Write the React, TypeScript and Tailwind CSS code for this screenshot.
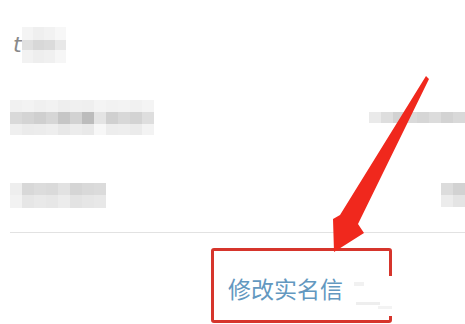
import React from 'react';

// blurred (mosaic) placeholders from the source screenshot
type MosaicProps = {
  rows: string[][];
  cellW: string;
  rowH: string[];
};

function Mosaic({ rows, cellW, rowH }: MosaicProps) {
  return (
    <div className="flex flex-col shrink-0">
      {rows.map((row, i) => (
        <div key={i} className={cn('flex', rowH[i])}>
          {row.map((c, j) => (
            <div key={j} className={cn(cellW, 'h-full', c)} />
          ))}
        </div>
      ))}
    </div>
  );
}

function cn(...parts: string[]) {
  return parts.filter(Boolean).join(' ');
}

const headerCells = [
  ['bg-[#f4f4f4]', 'bg-[#efefef]', 'bg-[#f2f2f2]', 'bg-[#f7f7f7]'],
  ['bg-[#e0e0e0]', 'bg-[#d8d8d8]', 'bg-[#dbdbdb]', 'bg-[#e8e8e8]'],
  ['bg-[#f2f2f2]', 'bg-[#eeeeee]', 'bg-[#f0f0f0]', 'bg-[#f6f6f6]'],
];

const row1Cells = [
  ['bg-[#f1f1f1]', 'bg-[#f3f3f3]', 'bg-[#f0f0f0]', 'bg-[#f2f2f2]', 'bg-[#eeeeee]', 'bg-[#f0f0f0]', 'bg-[#efefef]', 'bg-[#f4f4f4]', 'bg-[#f2f2f2]', 'bg-[#f3f3f3]', 'bg-[#f1f1f1]', 'bg-[#f4f4f4]'],
  ['bg-[#d9d9d9]', 'bg-[#d4d4d4]', 'bg-[#cfcfcf]', 'bg-[#d6d6d6]', 'bg-[#c6c6c6]', 'bg-[#d2d2d2]', 'bg-[#bcbcbc]', 'bg-[#e4e4e4]', 'bg-[#d0d0d0]', 'bg-[#d8d8d8]', 'bg-[#d3d3d3]', 'bg-[#dedede]'],
  ['bg-[#efefef]', 'bg-[#ebebeb]', 'bg-[#ececec]', 'bg-[#eeeeee]', 'bg-[#e8e8e8]', 'bg-[#ececec]', 'bg-[#e9e9e9]', 'bg-[#f7f7f7]', 'bg-[#ededed]', 'bg-[#eeeeee]', 'bg-[#ebebeb]', 'bg-[#f3f3f3]'],
];

const row1Right = [
  ['bg-[#eaeaea]', 'bg-[#dedede]', 'bg-[#d2d2d2]', 'bg-[#dadada]', 'bg-[#d6d6d6]', 'bg-[#dcdcdc]', 'bg-[#d3d3d3]', 'bg-[#d9d9d9]'],
];

const row2Cells = [
  ['bg-[#eeeeee]', 'bg-[#d8d8d8]', 'bg-[#dcdcdc]', 'bg-[#dadada]', 'bg-[#e2e2e2]', 'bg-[#d5d5d5]', 'bg-[#d9d9d9]', 'bg-[#dbdbdb]'],
  ['bg-[#f2f2f2]', 'bg-[#e6e6e6]', 'bg-[#e9e9e9]', 'bg-[#e7e7e7]', 'bg-[#ececec]', 'bg-[#e3e3e3]', 'bg-[#e6e6e6]', 'bg-[#e8e8e8]'],
];

const row2Right = [
  ['bg-[#dcdcdc]', 'bg-[#d2d2d2]'],
  ['bg-[#ececec]', 'bg-[#e4e4e4]'],
];

export default function App() {
  return (
    <div className="relative w-[465px] h-[324px] overflow-hidden bg-white font-['Noto_Sans_CJK_SC',sans-serif]">
      {/* header: name */}
      <div className="flex items-center h-[36px] mt-[27px] pl-[13px]">
        <span className="w-[9px] text-[22px] leading-none text-[#8a8a8a] font-['DejaVu_Sans',sans-serif] font-light italic">t</span>
        <Mosaic rows={headerCells} cellW="w-[11px]" rowH={['h-[13px]', 'h-[10px]', 'h-[13px]']} />
      </div>

      {/* row 1 */}
      <div className="flex justify-between items-start mt-[37px] pl-[10px]">
        <Mosaic rows={row1Cells} cellW="w-[12px]" rowH={['h-[12px]', 'h-[12px]', 'h-[11px]']} />
        <div className="mt-[12px]">
          <Mosaic rows={row1Right} cellW="w-[12px]" rowH={['h-[11px]']} />
        </div>
      </div>

      {/* row 2 */}
      <div className="flex justify-between items-start mt-[48px] pl-[10px]">
        <Mosaic rows={row2Cells} cellW="w-[12px]" rowH={['h-[12px]', 'h-[13px]']} />
        <Mosaic rows={row2Right} cellW="w-[12px]" rowH={['h-[12px]', 'h-[12px]']} />
      </div>

      <div className="ml-[10px] mt-[24px] h-px bg-[#e2e2e2]" />

      {/* action */}
      <div className="flex mt-[15px] pl-[211px]">
        <div className="relative w-[181px] h-[75px] rounded-[3px] border-[3px] border-[#d6352c] flex items-center pl-[14px] pt-[5px]">
          <span className="text-[23px] leading-none text-[#6398c0]">修改实名信</span>
          <div className="absolute left-[134px] top-[25px] w-[52px] h-[40px] bg-white">
            <div className="absolute left-[6px] top-[6px] w-[10px] h-[4px] bg-[#f1f1f1]" />
            <div className="absolute left-[8px] top-[26px] w-[24px] h-[3px] bg-[#eeeeee]" />
            <div className="absolute left-[30px] top-[30px] w-[14px] h-[3px] bg-[#f3f3f3]" />
          </div>
        </div>
      </div>

      {/* annotation arrow */}
      <svg className="absolute inset-0 pointer-events-none" width="465" height="324" viewBox="0 0 465 324">
        <polygon
          points="426,76 429,79 358,224 364,233 334,252 333,219 340,215"
          fill="#f0281d"
        />
      </svg>
    </div>
  );
}
